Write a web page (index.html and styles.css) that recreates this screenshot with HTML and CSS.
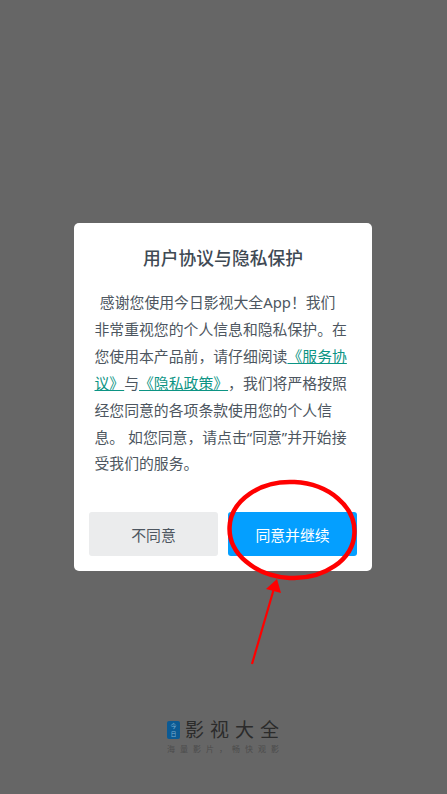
FILE: index.html
```html
<!DOCTYPE html>
<html lang="zh-CN">
<head>
  <meta charset="UTF-8">
  <meta name="viewport" content="width=device-width, initial-scale=1.0">
  <title>用户协议与隐私保护</title>
  <link rel="stylesheet" href="styles.css">
</head>
<body>
  <div class="screen">
    <div class="dialog">
      <h1 class="dialog-title">用户协议与隐私保护</h1>
      <p class="dialog-text">&nbsp;感谢您使用今日影视大全App！我们非常重视您的个人信息和隐私保护。在您使用本产品前，请仔细阅读<a class="link">《服务协议》</a>与<a class="link">《隐私政策》</a>，我们将严格按照经您同意的各项条款使用您的个人信息。 如您同意，请点击“同意”并开始接受我们的服务。</p>
      <div class="dialog-actions">
        <button class="btn btn-cancel">不同意</button>
        <button class="btn btn-ok">同意并继续</button>
      </div>
    </div>
    <div class="brand">
      <div class="brand-main">
        <span class="brand-icon">今<br>日</span>
        <span class="brand-name">影视大全</span>
      </div>
      <div class="brand-slogan">海量影片，畅快观影</div>
    </div>
    <!-- 标注：红色圆圈和箭头 -->
    <svg class="mark" width="447" height="794" viewBox="0 0 447 794">
      <ellipse cx="292" cy="530" rx="62.5" ry="48" fill="none" stroke="#f00" stroke-width="4.5" transform="rotate(3 292 530)"/>
      <path d="M252 664 L275 585" fill="none" stroke="#f00" stroke-width="2.2"/>
      <path d="M277 579 L266 589 L281 593 Z" fill="#f00"/>
    </svg>
  </div>
</body>
</html>
```

FILE: styles.css
```css
* {
  box-sizing: border-box;
}
html, body {
  margin: 0;
  padding: 0;
}
body {
  font-family: "Noto Sans", "Noto Sans CJK SC", sans-serif;
  background-color: #666;
}
.screen {
  position: relative;
  width: 447px;
  height: 794px;
  overflow: hidden;
  padding: 223px 0 0 74px;
  display: flex;
  flex-direction: column;
  align-items: flex-start;
}
.dialog {
  width: 298px;
  height: 348px;
  background-color: #fff;
  border-radius: 5px;
  padding: 22px 15px 15px;
  display: flex;
  flex-direction: column;
}
.dialog-title {
  margin: 0;
  font-size: 17.8px;
  font-weight: 500;
  line-height: 26px;
  text-align: center;
  color: #3f4a54;
}
.dialog-text {
  margin: 18px 0 0;
  padding: 0 9.9px 0 5.5px;
  font-size: 14.85px;
  line-height: 26.9px;
  text-indent: 1.5px;
  text-spacing-trim: space-all;
  color: #4d5660;
}
.link {
  color: #0c9484;
  text-decoration: underline;
}
.dialog-actions {
  margin-top: auto;
  display: flex;
  gap: 10px;
}
.btn {
  flex: 1;
  height: 44px;
  border: 0;
  border-radius: 3px;
  font-family: inherit;
  font-size: 14.85px;
}
.btn-cancel {
  background-color: #ebeced;
  color: #4d5660;
}
.btn-ok {
  background-color: #049fff;
  color: #fff;
}
.brand {
  margin: 149px 0 0 93px;
}
.brand-main {
  display: flex;
  align-items: center;
  gap: 5px;
}
.brand-icon {
  flex: none;
  width: 13px;
  height: 18px;
  border-radius: 2px;
  background-color: #0b5a94;
  color: #7fb0d0;
  font-size: 6px;
  line-height: 8px;
  text-align: center;
  padding-top: 1px;
}
.brand-name {
  font-size: 19px;
  line-height: 20px;
  letter-spacing: 6px;
  color: #2b2b2b;
  white-space: nowrap;
}
.brand-slogan {
  margin-top: 3px;
  font-size: 8px;
  line-height: 12px;
  letter-spacing: 5px;
  color: #4c4c4c;
  white-space: nowrap;
}
.mark {
  position: absolute;
  left: 0;
  top: 0;
  pointer-events: none;
}
```
